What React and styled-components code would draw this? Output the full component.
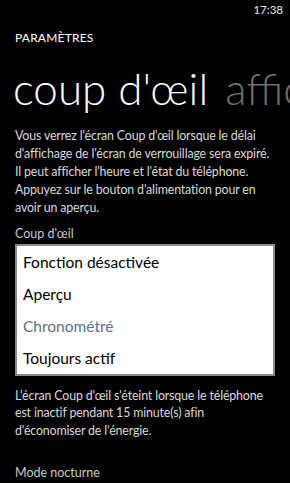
import React from 'react'
import styled, {createGlobalStyle} from 'styled-components'

const GlobalStyles = createGlobalStyle`
  html, body {
    margin: 0;
    padding: 0;
    background: #000;
  }
  body {
    font-family: Lato, "Open Sans", sans-serif;
    color: #fff;
  }
`

const Screen = styled.div`
  width: 290px;
  height: 483px;
  overflow: hidden;
  background: #000;
  display: flex;
  flex-direction: column;
`

const StatusBar = styled.div`
  height: 19px;
  display: flex;
  justify-content: flex-end;
  align-items: center;
  padding-right: 7px;
  font-size: 11.5px;
  color: #e8e8e8;
`

const PageTitle = styled.div`
  margin: 11px 0 0 15px;
  font-size: 12px;
  letter-spacing: 0.2px;
  line-height: 16px;
`

const Pivot = styled.div`
  display: flex;
  gap: 17px;
  margin: 15px 0 0 13px;
  white-space: nowrap;
  overflow: hidden;
  font-size: 44px;
  font-weight: 300;
  line-height: 54px;
`

const PivotItem = styled.span`
  color: ${p => (p.active ? '#fff' : '#6e6e6e')};
`

const Text = styled.p`
  margin: ${p => p.mt || 0}px 14px 0 15px;
  font-size: 12.4px;
  letter-spacing: -0.15px;
  line-height: 17.9px;
  color: #d8d8d8;
`

const Label = styled.div`
  margin: ${p => p.mt || 0}px 15px 0 15px;
  font-size: 12.5px;
  line-height: 18px;
  color: #c8c8c8;
`

const ListBox = styled.ul`
  list-style: none;
  margin: 1px 15px 0 15px;
  padding: 0;
  background: #fff;
  border: 2px solid #8a8a8a;
`

const ListItem = styled.li`
  height: 32px;
  display: flex;
  align-items: center;
  padding-left: 6px;
  font-size: 15.5px;
  color: ${p => (p.selected ? '#65707f' : '#000')};
`

const items = ['Fonction désactivée', 'Aperçu', 'Chronométré', 'Toujours actif']

export default function App() {
  return (
    <Screen>
      <GlobalStyles/>
      <StatusBar>17:38</StatusBar>
      <PageTitle>PARAMÈTRES</PageTitle>
      <Pivot>
        <PivotItem active>coup d'œil</PivotItem>
        <PivotItem>affichage</PivotItem>
      </Pivot>
      <Text mt={12}>
        Vous verrez l'écran Coup d'œil lorsque le délai<br/>
        d'affichage de l'écran de verrouillage sera expiré.<br/>
        Il peut afficher l'heure et l'état du téléphone.<br/>
        Appuyez sur le bouton d'alimentation pour en<br/>
        avoir un aperçu.
      </Text>
      <Label mt={8}>Coup d'œil</Label>
      <ListBox>
        {items.map(item => (
          <ListItem key={item} selected={item === 'Chronométré'}>{item}</ListItem>
        ))}
      </ListBox>
      <Text mt={11}>
        L'écran Coup d'œil s'éteint lorsque le téléphone<br/>
        est inactif pendant 15 minute(s) afin<br/>
        d'économiser de l'énergie.
      </Text>
      <Label mt={24}>Mode nocturne</Label>
    </Screen>
  )
}
